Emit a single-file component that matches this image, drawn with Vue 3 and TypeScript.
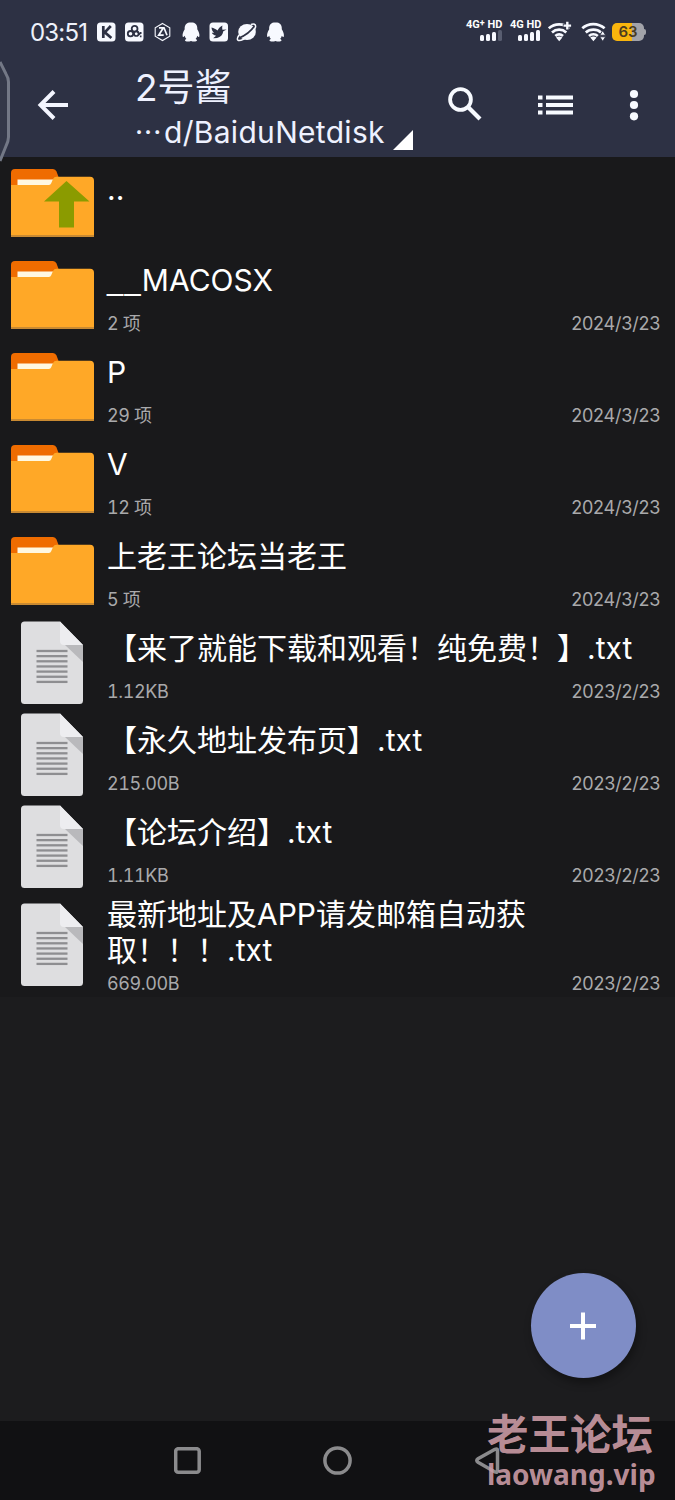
<script setup lang="ts">
interface Entry {
  kind: 'up' | 'folder' | 'file'
  prefix?: string
  name: string[]
  info?: string
  date?: string
}

const entries: Entry[] = [
  { kind: 'up', name: ['..'] },
  { kind: 'folder', prefix: '__', name: ['MACOSX'], info: '2 项', date: '2024/3/23' },
  { kind: 'folder', name: ['P'], info: '29 项', date: '2024/3/23' },
  { kind: 'folder', name: ['V'], info: '12 项', date: '2024/3/23' },
  { kind: 'folder', name: ['上老王论坛当老王'], info: '5 项', date: '2024/3/23' },
  { kind: 'file', name: ['【来了就能下载和观看！纯免费！】.txt'], info: '1.12KB', date: '2023/2/23' },
  { kind: 'file', name: ['【永久地址发布页】.txt'], info: '215.00B', date: '2023/2/23' },
  { kind: 'file', name: ['【论坛介绍】.txt'], info: '1.11KB', date: '2023/2/23' },
  { kind: 'file', name: ['最新地址及APP请发邮箱自动获', '取！！！.txt'], info: '669.00B', date: '2023/2/23' },
]
const textLines = Array.from({ length: 7 }, (_, i) => 28.3 + i * 5.15)
</script>

<template>
  <div class="screen">
    <header class="top">
      <div class="status">
        <span class="clock">03:51</span>
        <svg class="apps" width="190" height="22" viewBox="0 0 190 22">
          <g fill="#f7f9ff">
            <rect x="1" y="1.5" width="18.5" height="19" rx="3.5" />
            <rect x="29" y="1.5" width="18.5" height="19" rx="3.5" />
            <rect x="113.500" y="1.500" width="18.500" height="19" rx="3.500" />
            <path id="penguin" d="M95 1.300c-4.600 0-6.600 3.200-6.300 7-1.700 2.800-2.500 5.500-2 7.200.4 1.200 1.300.2 2-.7.200 1.300.8 2.400 1.700 3.300-1 .4-1.600 1-1.300 1.700.4 1 4.200.9 5.900.2 1.700.7 5.500.8 5.900-.2.300-.7-.3-1.300-1.300-1.700.9-.9 1.500-2 1.700-3.300.7.900 1.600 1.900 2 .7.500-1.700-.3-4.400-2-7.200.3-3.800-1.700-7-6.300-7z" />
            <use href="#penguin" x="84.500" />
          </g>
          <g fill="none" stroke="#2d3144">
            <path d="M7.300 5v12M14.800 5l-6 6.400 6.600 5.600" stroke-width="2.700" />
            <circle cx="38.600" cy="7.800" r="2.900" stroke-width="1.800" />
            <path d="M41 10l3 3.600" stroke-width="1.800" />
            <circle cx="34.500" cy="12.700" r="2.700" stroke-width="1.800" />
            <circle cx="40.300" cy="12.700" r="2.300" stroke-width="1.700" />
            <path d="M44.700 11v2M44.700 14.500v1.800" stroke-width="1.600" />
          </g>
          <path d="M66.500 2.500l7.300 4.200v8.600l-7.300 4.200-7.300-4.200V6.700z" fill="none" stroke="#f7f9ff" stroke-width="1.100" />
          <path d="M63 6.800h5l3 7.500M67.200 7l-4.500 7.200h5" fill="none" stroke="#f7f9ff" stroke-width="1.700" />
          <path d="M115.500 6.500c2.300.7 4.400 1.700 6 2.900 1.200-2.300 2.700-3.900 4.900-5-.3 1.700-.3 3 0 4.300l4.200-.2-3.300 1.700c-.6 3.600-2.700 5.900-6.200 6.700l-4 .4 3-2.500c-2.200-.6-3.700-1.600-4.300-3l2.300-.1c-1.600-1.300-2.500-3-2.600-5.200z" fill="#2d3144" />
          <ellipse cx="151" cy="11" rx="8.800" ry="8" fill="#f7f9ff" />
          <path d="M143 17c6.500-2.500 11.500-6.300 15.500-12" stroke="#2d3144" stroke-width="1.700" fill="none" />
          <path d="M143 14c-3.500 5.500-1 6.800 4.500 4.300 5.500-2.800 10.800-8 12-12 .7-3.400-2-3.700-4.500-2.800" stroke="#f7f9ff" stroke-width="1.500" fill="none" />
        </svg>
        <div class="signals">
          <div class="sim">
            <span>4G<sup>+</sup> HD</span>
            <i class="bars"><b class="b1" /><b class="b2" /><b class="b3" /><b class="b4 dim" /></i>
          </div>
          <div class="sim second">
            <span>4G HD</span>
            <i class="bars"><b class="b1" /><b class="b2" /><b class="b3" /><b class="b4" /></i>
          </div>
          <svg width="60" height="22" viewBox="0 0 60 22" class="wifi">
            <g fill="none" stroke="#f7f9ff" stroke-width="2.700">
              <path d="M.800 7.300c5.800-5.300 14.800-5.300 20.800 0M4 11.400c4-3.600 10.300-3.600 14.300 0M7.300 15c2.300-2 5.400-2 7.700 0" />
              <path d="M34.300 7.300c6-5.600 15.800-5.600 22.300 0M37.800 11.400c4.300-3.700 11-3.700 15.200 0M41 15c2.500-2.100 6.300-2.100 8.800 0" />
            </g>
            <path d="M8 16.500q3.200-1.800 6.400 0l-3.200 3.800zM42.200 16.500q3.200-1.800 6.400 0l-3.200 3.800z" fill="#f7f9ff" />
            <path d="M19 .500v8.500M14.800 4.700h8.500" stroke="#2d3144" stroke-width="4" />
            <path d="M19.300.800v7.600M15.500 4.600h7.600" stroke="#f7f9ff" stroke-width="2.400" />
            <path d="M51.800 14.200l2.900-4.500 2.900 4.500zM51.800 15.800l2.900 4.500 2.900-4.500z" fill="#f7f9ff" stroke="#2d3144" stroke-width=".8" />
          </svg>
          <div class="battery"><span>63</span></div>
        </div>
      </div>
      <div class="toolbar">
        <svg class="back" width="32" height="30" viewBox="0 0 32 30">
          <path d="M31 15H3.500M17 1.500L3.500 15 17 28.500" fill="none" stroke="#f3f5ff" stroke-width="4" />
        </svg>
        <div class="titles">
          <div class="title">2号酱</div>
          <div class="path"><span class="ellipsis">···</span><span class="route">d/BaiduNetdisk</span><svg width="20" height="20" viewBox="0 0 20 20"><path d="M20 0v20H0z" fill="#fff" /></svg></div>
        </div>
        <svg class="search" width="34" height="34" viewBox="0 0 34 34">
          <circle cx="12.500" cy="12.500" r="10.400" fill="none" stroke="#f7faff" stroke-width="3.800" />
          <path d="M20.500 20.500L32 32" stroke="#f7faff" stroke-width="4.200" />
        </svg>
        <svg class="list-icon" width="35" height="20" viewBox="0 0 35 20">
          <path d="M0 2.500h4.500M8 2.500h27M0 10h4.500M8 10h27M0 17.500h4.500M8 17.500h27" stroke="#f7faff" stroke-width="4" />
        </svg>
        <svg class="more" width="10" height="32" viewBox="0 0 10 32">
          <g fill="#f7faff"><circle cx="5" cy="5" r="4.100" /><circle cx="5" cy="16" r="4.100" /><circle cx="5" cy="27.300" r="4.100" /></g>
        </svg>
      </div>
      <svg class="edge" width="12" height="108" viewBox="0 0 12 108">
        <path d="M0 5l6 12q2.500 4 2.500 8v55q0 4-2.500 9L0 104" fill="#343849" stroke="#737886" stroke-width="3" />
      </svg>
    </header>

    <main class="list">
      <div v-for="(e, i) in entries" :key="i" class="row" :class="{ tall: e.name.length > 1 }">
        <div class="icon" :class="e.kind">
          <svg v-if="e.kind !== 'file'" width="84" height="69" viewBox="0 0 84 69">
            <path d="M0 20V4q0-4 4-4h38q2.500 0 3.500 2.500L49 12v8z" fill="#ef6c00" />
            <path d="M6.500 10.500h36v6h-36z" fill="#fff8e1" />
            <path d="M0 16h38q1.500 0 2.200-1.800L42 10q1-2.200 3.500-2.200H79q4 0 4 4V68H0z" fill="#ffa827" />
            <path d="M0 66h83v2H0z" fill="#c98a32" />
            <path v-if="e.kind === 'up'" d="M55.500 12l23 20.500H63v26H48v-26H33z" fill="#8b9b00" />
          </svg>
          <svg v-else width="63" height="84" viewBox="0 0 63 84">
            <path d="M3.500.500H39L62 24v55.500q0 3.500-3.500 3.500h-55Q0 83 0 79.500V4Q0 .500 3.500.500z" fill="#dedee0" />
            <path d="M44 24h18v17z" fill="#b9b9bc" />
            <path d="M39 .500L62 24H43q-4 0-4-4z" fill="#ededf0" />
            <path v-for="y in textLines" :key="y" :d="`M15.500 ${y + 1.700}h31`" stroke="#8e8e91" stroke-width="2.300" />
          </svg>
        </div>
        <div class="details">
          <div class="name"><div v-for="line in e.name" :key="line"><span v-if="e.prefix" class="prefix">{{ e.prefix }}</span>{{ line }}</div></div>
          <div v-if="e.info" class="meta"><span class="info">{{ e.info }}</span><span class="date">{{ e.date }}</span></div>
        </div>
      </div>
    </main>

    <div class="fab">
      <svg width="28" height="28" viewBox="0 0 28 28"><path d="M14 .500v27M1 14h26" stroke="#fff" stroke-width="4" /></svg>
    </div>

    <footer class="nav">
      <svg class="square" width="27" height="27" viewBox="0 0 27 27"><rect x="1.700" y="1.700" width="23.500" height="23.500" rx="2.500" /></svg>
      <svg class="circle" width="29" height="29" viewBox="0 0 29 29"><circle cx="14.500" cy="14.500" r="12.600" /></svg>
      <svg class="triangle" width="25" height="28" viewBox="0 0 25 28"><path d="M20 2.300L3 11.800q-2.500 1.700 0 3.400L20 25q2.500 1 2.500-1.500v-20q0-2-2.500-1.200z" /></svg>
    </footer>
    <div class="watermark">
      <div class="wm-cn">老王论坛</div>
      <div class="wm-url">laowang.vip</div>
    </div>
  </div>
</template>

<style>
body { margin: 0; background: #1c1c1e; }
</style>

<style scoped>
.screen {
  position: relative;
  width: 675px;
  height: 1500px;
  overflow: hidden;
  display: flex;
  flex-direction: column;
  background: #1c1c1e;
  color: #fff;
  font-family: Inter, "Noto Sans CJK SC", sans-serif;
}
svg { display: block; flex: none; }
.top { position: relative; height: 157px; background: #2d3144; flex: none; }
.status { display: flex; align-items: center; height: 64px; padding: 0 31px 0 30px; box-sizing: border-box; }
.clock { width: 66px; font-size: 24px; letter-spacing: -0.8px; color: #eef1fb; white-space: nowrap; }
.signals { margin-left: auto; display: flex; align-items: center; }
.sim { width: 44px; height: 24px; display: flex; flex-direction: column; }
.sim.second { width: 38px; }
.sim span { font: 700 11px/11px Roboto, sans-serif; white-space: nowrap; height: 11px; margin-top: -1px; }
.sim sup { font-size: 9px; line-height: 0; vertical-align: 2px; }
.bars { display: flex; align-items: flex-end; gap: 2px; height: 11px; margin-left: 14px; }
.second .bars { margin-left: 8px; }
.bars b { width: 4px; border-radius: 1.500px; background: #f7f9ff; }
.bars .b1 { height: 6px; } .bars .b2 { height: 7px; } .bars .b3 { height: 9px; } .bars .b4 { height: 11px; }
.bars .dim { background: #585d70; }
.wifi { margin: 0 4px 0 0; }
.battery {
  position: relative;
  width: 32px;
  height: 18px;
  border-radius: 5px;
  background: linear-gradient(90deg, #f9b50d 63%, #a2a3a9 63%);
  color: #4b3c20;
  font: 600 15px/18px Inter, sans-serif;
  text-align: center;
}
.battery::after { content: ""; position: absolute; left: 32px; top: 6px; width: 2px; height: 6px; border-radius: 0 2px 2px 0; background: #a2a3a9; }
.toolbar { display: flex; height: 93px; padding-left: 37px; align-items: flex-start; }
.back { margin-top: 26px; }
.titles { margin-left: 66px; width: 279px; color: #eef1ff; }
.title { height: 45px; margin-top: 1px; font-size: 37px; line-height: 45px; }
.path { display: flex; height: 40px; align-items: flex-start; font-size: 30px; line-height: 45px; }
.ellipsis { width: 29px; font-size: 28px; letter-spacing: 1px; }
.route { width: 221px; white-space: nowrap; letter-spacing: 0.3px; }
.path svg { margin: 20px 0 0 8px; }
.search { margin: 23px 0 0 34px; }
.list-icon { margin: 31px 0 0 56px; }
.more { margin: 25px 0 0 56px; }
.edge { position: absolute; left: 0; top: 57px; }
.list { background: #19191b; flex: none; }
.row { display: flex; height: 92px; }
.row.tall { height: 104px; }
.icon { width: 107px; display: flex; align-items: center; justify-content: center; padding-right: 1px; box-sizing: border-box; }
.icon.file { padding-right: 1.500px; }
.details { flex: 1; display: flex; flex-direction: column; justify-content: space-between; padding: 13px 15px 6px 0; box-sizing: border-box; }
.tall .details { padding: 3px 15px 2px 0; }
.name { font-size: 30px; line-height: 36px; white-space: nowrap; }
.up + .details .name { padding-top: 1px; }
.prefix { font-family: "Liberation Sans", sans-serif; font-size: 29px; line-height: 30px; letter-spacing: 1.300px; vertical-align: 1px; }
.meta { display: flex; justify-content: space-between; font-size: 18px; line-height: 22px; color: #a9a9ab; white-space: nowrap; }
.info { font-variant-numeric: tabular-nums; letter-spacing: -0.4px; }
.date { letter-spacing: -0.2px; margin-right: -0.2px; }
.fab {
  position: absolute;
  left: 530.500px;
  top: 1273px;
  width: 105px;
  height: 105px;
  border-radius: 50%;
  background: #7f8dc6;
  box-shadow: 2px 5px 9px rgba(0, 0, 0, .35);
  display: flex;
  align-items: center;
  justify-content: center;
}
.nav { margin-top: auto; height: 79px; display: flex; align-items: center; padding-left: 174px; background: #111113; }
.nav svg { fill: none; stroke: #8b8b8d; stroke-width: 3.500; }
.nav .circle { margin-left: 122px; }
.nav .triangle { margin-left: 123px; }
.watermark { position: absolute; left: 487px; top: 1409px; color: rgba(207, 158, 168, .9); white-space: nowrap; }
.wm-cn { font: 700 41.500px/46px "Noto Sans CJK SC", sans-serif; }
.wm-url { font: 700 28px/32px "Noto Sans", sans-serif; margin-top: 3px; }
</style>
